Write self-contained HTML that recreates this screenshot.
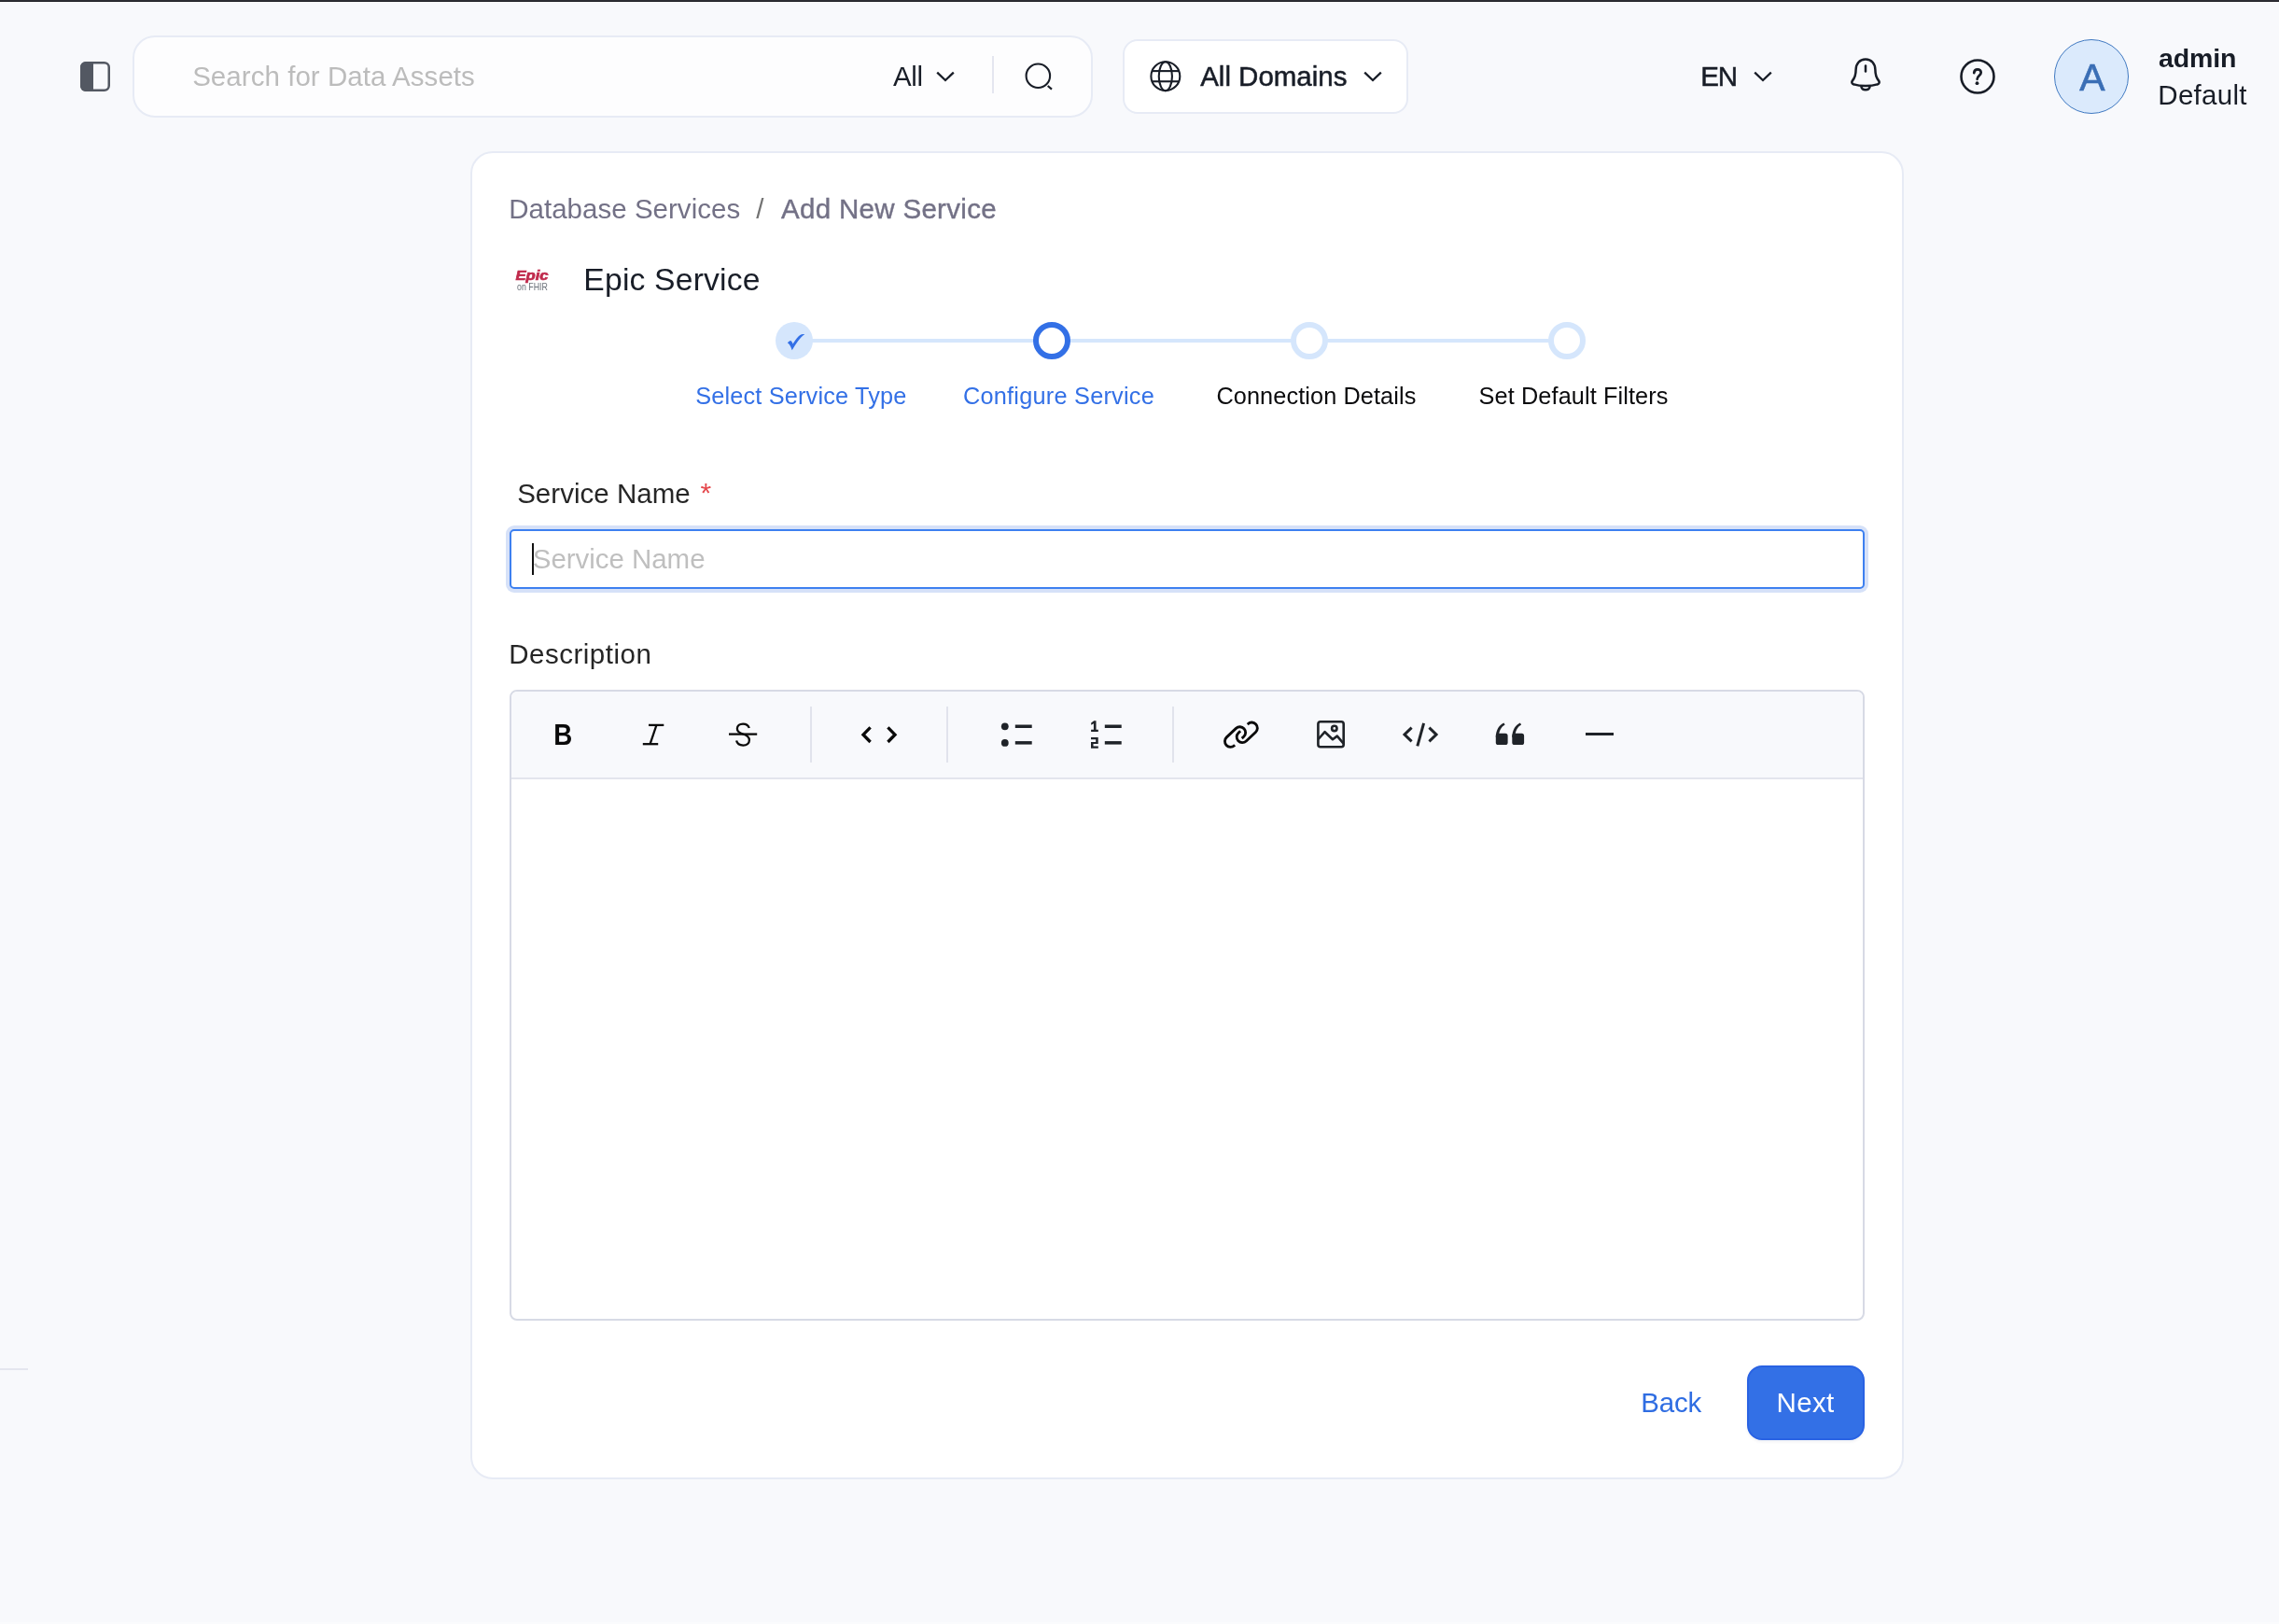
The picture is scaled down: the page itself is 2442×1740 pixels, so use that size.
<!DOCTYPE html>
<html><head><meta charset="utf-8"><title>Add New Service</title>
<style>
html,body{margin:0;padding:0}
body{width:2442px;height:1740px;position:relative;background:#f8f9fc;font-family:"Liberation Sans",sans-serif}
.a{position:absolute;display:block}
.t{position:absolute;white-space:nowrap;line-height:1}
#w{position:absolute;left:0;top:0;width:2442px;height:1740px;overflow:hidden;will-change:transform;transform-origin:0 0}
</style></head><body><div id="w">
<div class="a" style="left:0;top:0;width:2442px;height:1px;background:#2e2e35"></div><div class="a" style="left:0;top:1px;width:2442px;height:1px;background:#212127"></div><div class="a" style="left:0;top:2px;width:2442px;height:1px;background:#fdfdfe"></div><div class="a" style="left:0;top:1738px;width:2442px;height:2px;background:#fafbfd"></div>
<svg class="a" style="left:86px;top:66px" width="32" height="32" viewBox="0 0 32 32"><rect x="1.25" y="1.25" width="29.5" height="29.5" rx="5" fill="none" stroke="#535862" stroke-width="2.5"/><path d="M6 0H14V32H6a6 6 0 0 1-6-6V6a6 6 0 0 1 6-6z" fill="#535862"/></svg>
<div class="a" style="left:142px;top:38px;width:1029px;height:88px;box-sizing:border-box;border:2px solid #e7ebf5;border-radius:24px;background:#fdfdfe"></div>
<span class="t" style="left:206.15px;top:67px;font-size:29.5px;letter-spacing:0.048px;color:#bcbcbc;">Search for Data Assets</span>
<span class="t" style="left:957.00px;top:67px;font-size:29.5px;letter-spacing:-0.337px;color:#181d27;">All</span>
<svg class="a" style="left:1002.2px;top:75.2px" width="22" height="14" viewBox="0 0 22 14"><polyline points="2.2,2.6 11,11 19.8,2.6" fill="none" stroke="#181d27" stroke-width="2.3" stroke-linejoin="miter"/></svg>
<div class="a" style="left:1063px;top:60px;width:2px;height:40px;background:#e4e6f0"></div>
<svg class="a" style="left:1096px;top:64px" width="36" height="36" viewBox="1096 64 36 36"><circle cx="1112.35" cy="81.2" r="12.75" fill="none" stroke="#181d27" stroke-width="2.1"/><line x1="1122.7" y1="92" x2="1127" y2="95.7" stroke="#181d27" stroke-width="2.2"/></svg>
<div class="a" style="left:1203px;top:42px;width:306px;height:80px;box-sizing:border-box;border:2px solid #e7ebf5;border-radius:16px;background:#fff"></div>
<svg class="a" style="left:1230px;top:63px" width="38" height="38" viewBox="1230 63 38 38" fill="none" stroke="#181d27" stroke-width="2.1"><circle cx="1248.85" cy="81.65" r="15.45"/><ellipse cx="1248.85" cy="81.65" rx="7.1" ry="15.45"/><line x1="1234.4" y1="76.1" x2="1263.3" y2="76.1"/><line x1="1234.4" y1="87.25" x2="1263.3" y2="87.25"/></svg>
<span class="t" style="left:1286.20px;top:67px;font-size:29.5px;letter-spacing:-0.017px;color:#181d27;-webkit-text-stroke:0.5px #181d27;">All Domains</span>
<svg class="a" style="left:1460px;top:75.2px" width="22" height="14" viewBox="0 0 22 14"><polyline points="2.2,2.6 11,11 19.8,2.6" fill="none" stroke="#181d27" stroke-width="2.3" stroke-linejoin="miter"/></svg>
<span class="t" style="left:1822.22px;top:67px;font-size:29.5px;letter-spacing:-1.150px;color:#181d27;-webkit-text-stroke:0.5px #181d27;">EN</span>
<svg class="a" style="left:1878.2px;top:75px" width="22" height="14" viewBox="0 0 22 14"><polyline points="2.2,2.6 11,11 19.8,2.6" fill="none" stroke="#181d27" stroke-width="2.3" stroke-linejoin="miter"/></svg>
<svg class="a" style="left:1983px;top:62px" width="32" height="36" viewBox="0 0 32 36" fill="none" stroke="#181d27" stroke-width="2.5" stroke-linecap="round" stroke-linejoin="round"><path d="M16 1.4C9.6 1.4 5.6 6.4 5.6 12.8C5.6 19 4 22 2 24.4C0.7 26 1.4 28 3.4 28.4C10 30.6 22 30.6 28.6 28.4C30.6 28 31.3 26 30 24.4C28 22 26.4 19 26.4 12.8C26.4 6.4 22.4 1.4 16 1.4Z"/><path d="M11.4 31C12.4 35.4 19.6 35.4 20.6 31"/><line x1="16" y1="8.4" x2="16" y2="14.6"/></svg>
<svg class="a" style="left:2099px;top:62px" width="40" height="40" viewBox="2099 62 40 40" fill="none" stroke="#181d27"><circle cx="2119" cy="82" r="17.5" stroke-width="2.6"/><path d="M2115.2 78.1C2115.4 75.6 2117 74.3 2119 74.3C2121.2 74.3 2122.7 75.8 2122.7 77.7C2122.7 80.9 2118.6 81.1 2118.6 84.8" stroke-width="2.7" stroke-linecap="round"/><circle cx="2118.5" cy="89.2" r="1.9" fill="#181d27" stroke="none"/></svg>
<div class="a" style="left:2201px;top:42px;width:80px;height:80px;box-sizing:border-box;border:1.5px solid #3f78c0;border-radius:50%;background:#dbeafc"></div>
<span class="t" style="left:2228.20px;top:63px;font-size:41px;letter-spacing:0.000px;color:#3a6eb5;-webkit-text-stroke:0.6px #3a6eb5;">A</span>
<span class="t" style="left:2313.05px;top:48px;font-size:28.5px;letter-spacing:-0.150px;color:#181d27;font-weight:700;">admin</span>
<span class="t" style="left:2312.32px;top:87px;font-size:29.5px;letter-spacing:0.271px;color:#181d27;">Default</span>
<div class="a" style="left:504px;top:162px;width:1536px;height:1423px;box-sizing:border-box;border:2px solid #e7ebf5;border-radius:24px;background:#fff"></div>
<span class="t" style="left:545.23px;top:209px;font-size:29.5px;letter-spacing:0.022px;color:#737186;">Database Services</span>
<span class="t" style="left:810.30px;top:209px;font-size:29.5px;letter-spacing:0.000px;color:#737373;">/</span>
<span class="t" style="left:837.00px;top:209px;font-size:29.5px;letter-spacing:0.314px;color:#737186;-webkit-text-stroke:0.4px #737186;">Add New Service</span>
<svg class="a" style="left:546px;top:282px" width="52" height="36" viewBox="546 282 52 36" font-family="Liberation Sans, sans-serif"><text x="552.4" y="299.7" font-size="15.4" font-weight="700" font-style="italic" fill="#c02a4c" stroke="#c02a4c" stroke-width="0.7" textLength="35.2" lengthAdjust="spacingAndGlyphs">Epic</text><text x="554" y="310.7" font-size="10.3" fill="#6a7078" textLength="32.9" lengthAdjust="spacingAndGlyphs">on FHIR</text></svg>
<span class="t" style="left:625.35px;top:283px;font-size:33.7px;letter-spacing:0.170px;color:#181d27;">Epic Service</span>
<div class="a" style="left:851px;top:363px;width:828px;height:4px;background:#d5e6fc"></div>
<div class="a" style="left:831px;top:345px;width:40px;height:40px;border-radius:50%;background:#d5e6fc"></div>
<svg class="a" style="left:831px;top:345px" width="40" height="40" viewBox="831 345 40 40"><path d="M843.8 367.3C845 366.3 846 365.4 847.1 365.1C848.3 365.6 849 367 849.5 368.5C852.2 364.2 855 360.5 857.3 358.9C858.8 358 860.4 357.8 862.2 358.2C859.8 359.7 857.3 362.4 855.2 365.3C852.8 368.6 850.6 372 848.7 375.2C847.9 373 847.1 371.2 846.1 369.6C845.4 368.6 844.7 367.8 843.8 367.3Z" fill="#3370e6"/></svg>
<div class="a" style="left:1107px;top:345px;width:40px;height:40px;box-sizing:border-box;border-radius:50%;border:6px solid #3370e6;background:#fff"></div>
<div class="a" style="left:1383px;top:345px;width:40px;height:40px;box-sizing:border-box;border-radius:50%;border:6px solid #d5e6fc;background:#fff"></div>
<div class="a" style="left:1659px;top:345px;width:40px;height:40px;box-sizing:border-box;border-radius:50%;border:6px solid #d5e6fc;background:#fff"></div>
<span class="t" style="left:745.17px;top:412px;font-size:25.3px;letter-spacing:0.172px;color:#3370e6;">Select Service Type</span>
<span class="t" style="left:1031.95px;top:412px;font-size:25.3px;letter-spacing:0.239px;color:#3370e6;">Configure Service</span>
<span class="t" style="left:1303.45px;top:412px;font-size:25.3px;letter-spacing:0.090px;color:#0b0b0d;">Connection Details</span>
<span class="t" style="left:1584.58px;top:412px;font-size:25.3px;letter-spacing:0.099px;color:#0b0b0d;">Set Default Filters</span>
<span class="t" style="left:554.15px;top:514px;font-size:29.5px;letter-spacing:0.032px;color:#262626;">Service Name</span>
<span class="t" style="left:750.42px;top:513px;font-size:30px;letter-spacing:0.000px;color:#e5484d;">*</span>
<div class="a" style="left:546px;top:567px;width:1452px;height:64px;box-sizing:border-box;border:2px solid #3d80f0;border-radius:5px;background:#fff;box-shadow:0 0 0 4px #d6e1f8"></div>
<div class="a" style="left:570px;top:582px;width:2px;height:34px;background:#111"></div>
<span class="t" style="left:570.85px;top:584px;font-size:29.5px;letter-spacing:-0.050px;color:#bfbfbf;">Service Name</span>
<span class="t" style="left:545.23px;top:686px;font-size:29.5px;letter-spacing:0.505px;color:#262626;">Description</span>
<div class="a" style="left:546px;top:739px;width:1452px;height:676px;box-sizing:border-box;border:2px solid #d7dae5;border-radius:8px;background:#fff;overflow:hidden"><div style="height:92px;background:#f8f9fc;border-bottom:2px solid #e3e5ed"></div></div>
<div class="a" style="left:868px;top:757px;width:2px;height:60px;background:#e1e3ec"></div>
<div class="a" style="left:1014px;top:757px;width:2px;height:60px;background:#e1e3ec"></div>
<div class="a" style="left:1256px;top:757px;width:2px;height:60px;background:#e1e3ec"></div>
<span class="t" style="left:592.90px;top:773px;font-size:30.8px;letter-spacing:0.000px;color:#0a0a0a;font-weight:700;transform:scaleX(.9);transform-origin:2.6px 0;">B</span>
<svg class="a" style="left:686px;top:772px" width="30" height="30" viewBox="686 772 30 30" fill="none" stroke="#0a0a0a" stroke-width="2.3"><line x1="695" y1="776.9" x2="711.3" y2="776.9"/><line x1="688.8" y1="797.2" x2="705.2" y2="797.2"/><line x1="703.4" y1="777" x2="696.6" y2="797.2"/></svg>
<svg class="a" style="left:780px;top:772px" width="32" height="30" viewBox="780 772 32 30" fill="none" stroke="#0a0a0a" stroke-width="2.3"><path transform="translate(788,774.4)" d="M14.8 5.6C13.8 2.6 11.2 1.2 8.1 1.2C4.6 1.2 1.9 3.2 1.9 6.4C1.9 9.4 4 10.9 8.1 12.1C12.6 13.4 14.9 15 14.9 18.6C14.9 22.1 12.1 24.2 8.3 24.2C4.6 24.2 1.9 22.5 1.1 19.2"/><line x1="781" y1="786.6" x2="811.2" y2="786.6"/></svg>
<svg class="a" style="left:920px;top:774px" width="44" height="26" viewBox="920 774 44 26" fill="none" stroke="#0a0a0a" stroke-width="3.3"><polyline points="932.6,779.4 925,787.2 932.6,795"/><polyline points="951.4,779.4 959,787.2 951.4,795"/></svg>
<svg class="a" style="left:1070px;top:772px" width="38" height="30" viewBox="1070 772 38 30" fill="#1f2328"><circle cx="1076.8" cy="778.3" r="3.9"/><circle cx="1076.8" cy="795.9" r="3.9"/><rect x="1087.8" y="776.5" width="17.9" height="3.5"/><rect x="1087.8" y="794.1" width="17.9" height="3.5"/></svg>
<svg class="a" style="left:1166px;top:770px" width="38" height="34" viewBox="1166 770 38 34" fill="#1f2328"><rect x="1183.8" y="776.5" width="17.9" height="3.5"/><rect x="1183.8" y="794.1" width="17.9" height="3.5"/><path d="M1169.2 774.6l3-2.4h2.3v9.6h2.3v2.2h-7.7v-2.2h2.8v-6.6l-2.7 1.6z"/><path d="M1169 790.1h7.7v6.9h-5.2v2.6h5.3v2.2h-7.8v-6.9h5.2v-2.6h-5.2z"/></svg>
<svg class="a" style="left:1306px;top:768px" width="48" height="40" viewBox="1306 768 48 40" fill="none" stroke="#0a0a0a" stroke-width="2.85"><path d="M1323.08 798.30L1322.65 798.71A6.05 6.05 0 0 1 1314.35 789.89L1324.45 780.39A6.05 6.05 0 0 1 1332.75 789.21L1330.71 791.13"/><path d="M1336.72 776.10L1337.15 775.69A6.05 6.05 0 0 1 1345.45 784.51L1335.35 794.01A6.05 6.05 0 0 1 1327.05 785.19L1329.09 783.27"/></svg>
<svg class="a" style="left:1409px;top:770px" width="34" height="34" viewBox="1409 770 34 34" fill="none" stroke="#1f2328" stroke-width="2.6" stroke-linejoin="round"><rect x="1412.4" y="773.3" width="27.3" height="27" rx="2.5"/><circle cx="1429.8" cy="780.4" r="2.7"/><polyline points="1412.6,792 1419.6,784.2 1428,792.2 1432.8,788.6 1439.6,796.6"/></svg>
<svg class="a" style="left:1500px;top:772px" width="44" height="30" viewBox="1500 772 44 30" fill="none" stroke="#1f2328" stroke-width="3"><polyline points="1512.6,779.6 1505,787 1512.6,794.4"/><polyline points="1531.4,779.6 1539,787 1531.4,794.4"/><line x1="1525.6" y1="774.8" x2="1518.8" y2="799.3"/></svg>
<svg class="a" style="left:1600px;top:772px" width="36" height="28" viewBox="1600 772 36 28" fill="#1f2328"><g transform="translate(0 0)"><rect x="1602.8" y="785.8" width="12.8" height="12.2" rx="2.6"/><path d="M1602.8 790C1602.8 782 1606.5 777 1611.4 774.6L1612.6 776.6C1608.6 779 1606 783 1606 790Z"/></g><g transform="translate(17.5 0)"><rect x="1602.8" y="785.8" width="12.8" height="12.2" rx="2.6"/><path d="M1602.8 790C1602.8 782 1606.5 777 1611.4 774.6L1612.6 776.6C1608.6 779 1606 783 1606 790Z"/></g></svg>
<div class="a" style="left:1699px;top:785.3px;width:30px;height:3.2px;background:#1f2328"></div>
<span class="t" style="left:1758.22px;top:1488px;font-size:29.5px;letter-spacing:-0.192px;color:#2f6de2;">Back</span>
<div class="a" style="left:1872px;top:1463px;width:126px;height:80px;box-sizing:border-box;border:2px solid #2962e3;border-radius:16px;background:#3370e6;box-shadow:0 2px 3px rgba(10,30,80,.06)"></div>
<span class="t" style="left:1903.53px;top:1488px;font-size:29.5px;letter-spacing:0.325px;color:#fff;">Next</span>
<div class="a" style="left:0;top:1466px;width:30px;height:2px;background:#e4e6ef"></div>
</div>
<script>(function(){var w=window.innerWidth;if(w&&Math.abs(w-2442)>2){var k=w/2442,e=document.getElementById("w");e.style.transform="scale("+k+")";document.body.style.width=w+"px";document.body.style.height=Math.round(1740*k)+"px";}})();</script>
</body></html>
